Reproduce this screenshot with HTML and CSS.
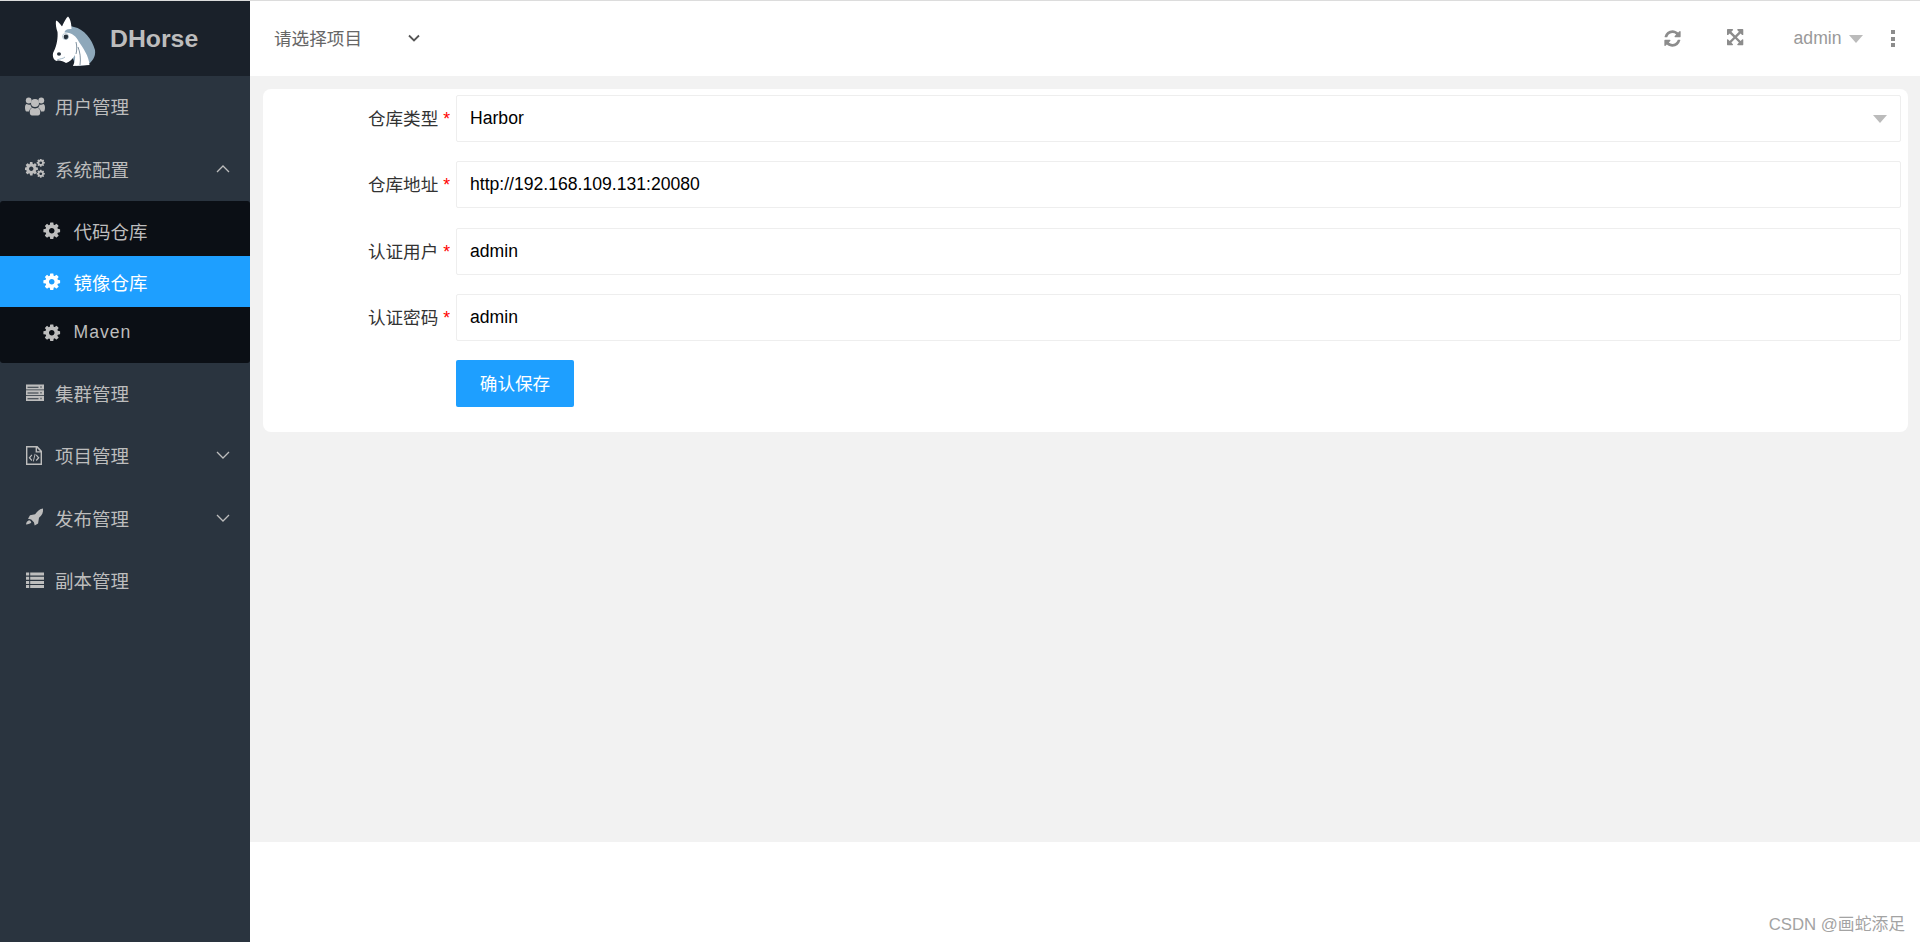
FILE: index.html
```html
<!DOCTYPE html>
<html lang="zh-CN">
<head>
<meta charset="utf-8">
<title>DHorse</title>
<link rel="stylesheet" href="styles.css">
</head>
<body>
<svg class="defs" width="0" height="0" aria-hidden="true">
  <defs>
    <symbol id="i-gear" viewBox="0 0 1792 1792"><path d="M1152 896q0-106-75-181t-181-75-181 75-75 181 75 181 181 75 181-75 75-181zm512-109v222q0 12-8 23t-20 13l-185 28q-19 54-39 91 35 50 107 138 10 12 10 25t-9 23q-27 37-99 108t-94 71q-12 0-26-9l-138-108q-44 23-91 38-16 136-29 186-7 28-36 28h-222q-14 0-24.500-8.500t-11.500-21.500l-28-184q-49-16-90-37l-141 107q-10 9-25 9-14 0-25-11-126-114-165-168-7-10-7-23 0-12 8-23 15-21 51-66.500t54-70.500q-27-50-41-99l-183-27q-13-2-21-12.500t-8-23.500v-222q0-12 8-23t19-13l186-28q14-46 39-92-40-57-107-138-10-12-10-24 0-10 9-23 26-36 98.500-107.500t94.500-71.500q13 0 26 10l138 107q44-23 91-38 16-136 29-186 7-28 36-28h222q14 0 24.500 8.500t11.500 21.500l28 184q49 16 90 37l142-107q9-9 24-9 13 0 25 10 129 119 165 170 7 8 7 22 0 12-8 23-15 21-51 66.500t-54 70.500q26 50 41 98l183 28q13 2 21 12.500t8 23.500z"/></symbol>
    <symbol id="i-down" viewBox="0 0 14 8"><path d="M1 1l6 6 6-6" fill="none" stroke="currentColor" stroke-width="1.300"/></symbol>
    <symbol id="i-up" viewBox="0 0 14 8"><path d="M1 7l6-6 6 6" fill="none" stroke="currentColor" stroke-width="1.300"/></symbol>
  </defs>
</svg>
<div class="app">
  <aside class="sidebar">
    <div class="brand">
      <svg class="horse" viewBox="0 0 70 70" width="70" height="70" aria-hidden="true">
        <path fill="#8ea8ba" d="M20 21C24 19 30 20 34 21C44 23 52 33 55 44C56 51 52 56 47 59L36 60Z"/>
        <path fill="#fff" d="M16 14.500C18 15 20 18 22 20.500C24 16 26 12 28 10.500C30.500 13 31.500 18 31.500 23C27 22.500 24.500 24.500 24.500 26.500C31 26 36.500 30 39 36C43 42 49 50 49.500 59L33 60C34.500 56.500 35.500 52.500 35 49C33 53 29 56 26 57C23 55 19 54 16.500 55C12.500 53.500 12 48 14 45C17 39 18 31 17.500 26C16 22 15.500 18 16 14.500Z"/>
        <circle cx="26" cy="31" r="2.400" fill="#26313b"/>
        <circle cx="25.500" cy="30.500" r="3" fill="none" stroke="#8ea8ba" stroke-width=".6"/>
        <ellipse cx="19" cy="48" rx="2" ry="1.700" fill="#26313b"/>
        <path d="M17 54C20 52.500 23 53 25 51" fill="none" stroke="#8ea8ba" stroke-width=".8"/>
        <path d="M36 48C37 44 37 40 36 36M40 59C41 52 40 46 38 41" fill="none" stroke="#5f7688" stroke-width=".8"/>
      </svg>
      <span class="brand-name">DHorse</span>
    </div>
    <nav class="menu">
      <a class="item">
        <svg class="ico" viewBox="0 0 20 19" aria-hidden="true"><circle cx="3.700" cy="3.500" r="2.900"/><circle cx="16.300" cy="3.500" r="2.900"/><circle cx="10" cy="6" r="4"/><path d="M0 10.500C0 8.200.8 7 1.800 7c.9.700 2.400 1 3.700.4.100 1.300.7 2.400 1.600 3.200-1.500.6-2.600 2-3 3.900H1.500C.5 14.500 0 12.800 0 10.500zM20 10.500C20 8.200 19.200 7 18.200 7c-.9.700-2.400 1-3.700.4-.1 1.300-.7 2.400-1.600 3.200 1.500.6 2.600 2 3 3.900h2.600c1 0 1.500-1.700 1.500-4zM4.800 15.500c0-2.800 1-4.600 2.700-4.700 1.400 1 3.600 1 5 0 1.700.1 2.700 1.900 2.700 4.700 0 2-.9 3-2.200 3H7c-1.300 0-2.200-1-2.200-3z"/></svg>
        <span>用户管理</span>
      </a>
      <a class="item">
        <svg class="ico" viewBox="0 0 20 19" aria-hidden="true"><use href="#i-gear" x="-1.500" y="2" width="15.500" height="15.500"/><use href="#i-gear" x="11" y="-1" width="9.500" height="9.500"/><use href="#i-gear" x="11" y="10" width="9.500" height="9.500"/></svg>
        <span>系统配置</span>
        <svg class="chev" aria-hidden="true"><use href="#i-up"/></svg>
      </a>
      <div class="submenu">
        <a class="subitem"><svg class="ico-sm" aria-hidden="true"><use href="#i-gear"/></svg><span>代码仓库</span></a>
        <a class="subitem active"><svg class="ico-sm" aria-hidden="true"><use href="#i-gear"/></svg><span>镜像仓库</span></a>
        <a class="subitem"><svg class="ico-sm" aria-hidden="true"><use href="#i-gear"/></svg><span class="latin">Maven</span></a>
      </div>
      <a class="item">
        <svg class="ico" viewBox="0 0 20 19" aria-hidden="true"><path d="M1 1.500h18v5H1zM1 7.200h18v5H1zM1 12.900h18v5H1z"/><path fill="#2a343f" d="M2.500 3.800h11v1h-11zM2.500 9.500h11v1h-11zM2.500 15.200h11v1h-11zM15.500 3.300h1v1.500h-1zM15.500 9h1v1.500h-1zM15.500 14.700h1v1.500h-1z"/></svg>
        <span>集群管理</span>
      </a>
      <a class="item">
        <svg class="ico" viewBox="0 0 20 19" aria-hidden="true"><path fill-rule="evenodd" d="M1 0h11.500L17 5v14H1zM2.400 1.400v16.200h13.200V6.500h-5V1.400zM12 1.900v3.300h3.100z"/><path d="M6.500 8.500l.8.800-2 2.400 2 2.400-.8.800-2.900-3.200zM11.600 8.500l-.8.800 2 2.400-2 2.400.8.800 2.900-3.200zM9.700 7.800l.9.200-1.800 7.500-.9-.2z"/></svg>
        <span>项目管理</span>
        <svg class="chev" aria-hidden="true"><use href="#i-down"/></svg>
      </a>
      <a class="item">
        <svg class="ico" viewBox="0 0 20 19" aria-hidden="true"><path d="M18 .5c.4 3.800-.8 6.800-4 9.300l-.9 5.600-3.400 2.100-.8-3.300-2.700-2.700-3.200-.8 2-3.500 5.100-.9C12.700 3 14.800.8 18 .5zM4 12.300c1.200.2 2.100 1.100 2.300 2.300-.8 1-2.700 1.700-5.300 1.900.2-2 1.300-3.600 3-4.200z"/></svg>
        <span>发布管理</span>
        <svg class="chev" aria-hidden="true"><use href="#i-down"/></svg>
      </a>
      <a class="item">
        <svg class="ico" viewBox="0 0 20 19" aria-hidden="true"><path d="M1 2.500h3.200v3H1zM5.200 2.500H19v3H5.200zM1 6.800h3.200v3H1zM5.200 6.800H19v3H5.200zM1 11h3.200v3H1zM5.200 11H19v3H5.200zM1 15h3.200v3H1zM5.200 15H19v3H5.200z"/></svg>
        <span>副本管理</span>
      </a>
    </nav>
  </aside>
  <div class="main">
    <header class="topbar">
      <div class="project">
        <span>请选择项目</span>
        <svg class="project-chev" viewBox="0 0 12 8" aria-hidden="true"><path d="M1 1.500l5 5 5-5" fill="none" stroke="currentColor" stroke-width="1.800"/></svg>
      </div>
      <div class="tools">
        <svg class="tool" viewBox="0 0 1792 1792" aria-hidden="true"><path d="M1639 1056q0 5-1 7-64 268-268 434.500t-478 166.500q-146 0-282.500-55t-243.500-157l-129 129q-19 19-45 19t-45-19-19-45v-448q0-26 19-45t45-19h448q26 0 45 19t19 45-19 45l-137 137q71 66 161 102t187 36q134 0 250-65t186-179q11-17 53-117 8-23 30-23h192q13 0 22.500 9.500t9.500 22.500zm25-800v448q0 26-19 45t-45 19h-448q-26 0-45-19t-19-45 19-45l138-138q-148-137-349-137-134 0-250 65t-186 179q-11 17-53 117-8 23-30 23h-199q-13 0-22.500-9.500t-9.500-22.500v-7q65-268 270-434.500t480-166.500q146 0 284 55.500t245 156.500l130-129q19-19 45-19t45 19 19 45z"/></svg>
        <svg class="tool tool-expand" viewBox="0 0 1792 1792" aria-hidden="true"><path d="M1283 413l-355 355 355 355 144-144q29-31 70-14 39 17 39 59v448q0 26-19 45t-45 19h-448q-42 0-59-40-17-39 14-69l144-144-355-355-355 355 144 144q31 30 14 69-17 40-59 40h-448q-26 0-45-19t-19-45v-448q0-42 40-59 39-17 69 14l144 144 355-355-355-355-144 144q-19 19-45 19-12 0-24-5-40-17-40-59v-448q0-26 19-45t45-19h448q42 0 59 40 17 39-14 69l-144 144 355 355 355-355-144-144q-31-30-14-69 17-40 59-40h448q26 0 45 19t19 45v448q0 42-39 59-13 5-25 5-26 0-45-19z"/></svg>
        <span class="user">admin</span>
        <i class="caret caret-user"></i>
        <span class="dots"><i></i><i></i><i></i></span>
      </div>
    </header>
    <main class="content">
      <form class="card">
        <label class="label">仓库类型 <b>*</b></label>
        <div class="field select"><span>Harbor</span><i class="caret"></i></div>
        <label class="label">仓库地址 <b>*</b></label>
        <input class="field" value="http://192.168.109.131:20080">
        <label class="label">认证用户 <b>*</b></label>
        <input class="field" value="admin">
        <label class="label">认证密码 <b>*</b></label>
        <input class="field" value="admin">
        <button class="save" type="button">确认保存</button>
      </form>
    </main>
    <footer class="foot"><span class="mark">CSDN @画蛇添足</span></footer>
  </div>
</div>
</body>
</html>
```
FILE: styles.css
```css
* { box-sizing: border-box; }
html, body { height: 100%; margin: 0; }
body {
  overflow: hidden;
  font-family: "Liberation Sans", "Noto Sans CJK SC", sans-serif;
  font-size: 17.6px;
  background: #fff;
  border-top: 1px solid #dcdcdc;
}
.defs { position: absolute; }
.app { display: flex; height: 100%; }

.sidebar { width: 250px; flex: none; background: #2a343f; color: #bdbdbd; }
.brand { height: 75px; background: #1a212a; display: flex; align-items: center; padding-left: 40px; }
.horse { flex: none; margin-top: 4px; }
.brand-name { font-family: "Liberation Sans", sans-serif; font-weight: 700; font-size: 24.8px; color: #bdbdbd; }
.menu { display: block; }
.item { display: flex; align-items: center; height: 62.4px; padding: 0 0 2px 25px; font-size: 18.5px; }
.ico { width: 20px; height: 19px; flex: none; margin-right: 10px; fill: #bdbdbd; }
.chev { width: 14px; height: 8px; margin-left: auto; margin-right: 20px; color: #bdbdbd; }
.submenu { background: #0b0f15; padding: 5px 0; border-radius: 3px; }
.subitem { display: flex; align-items: center; height: 50.6px; padding-left: 41.500px; font-size: 18.5px; }
.subitem.active { background: #1e9fff; color: #fff; }
.ico-sm { width: 19.500px; height: 19.500px; flex: none; margin-right: 12.500px; fill: currentColor; }
.latin { letter-spacing: 1px; font-size: 17.6px; }

.main { flex: 1; display: flex; flex-direction: column; min-width: 0; }
.topbar { height: 75px; flex: none; background: #fff; display: flex; align-items: center; justify-content: space-between; padding-left: 24px; color: #666; }
.project { display: flex; align-items: center; padding-bottom: 2px; }
.project-chev { width: 12px; height: 8px; margin-left: 46px; color: #555; }
.tools { display: flex; align-items: center; padding-right: 25px; color: #999; }
.tool { width: 19px; height: 19px; fill: #8c8c8c; margin-right: 45px; }
.tool-expand { margin-right: 48px; }
.user { font-size: 17.6px; color: #999; }
.caret { display: block; width: 0; height: 0; border-style: solid; border-width: 8px 7.500px 0; border-color: #bbb transparent transparent; }
.caret-user { margin-left: 7px; margin-right: 28px; }
.dots { display: flex; flex-direction: column; gap: 2.500px; }
.dots i { display: block; width: 4.500px; height: 4px; background: #8c8c8c; }

.content { flex: 1; background: #f2f2f2; padding: 13px 12px 0 13px; }
.card {
  background: #fff;
  border-radius: 8px;
  display: grid;
  grid-template-columns: 193px 1fr;
  row-gap: 19.250px;
  padding: 6px 7px 24.500px 0;
  align-items: center;
}
.label { justify-self: end; padding-right: 6px; color: #333; font-size: 17.6px; position: relative; top: -1px; }
.label b { color: #f00; font-weight: 400; }
.field {
  display: block;
  width: 100%;
  height: 47px;
  border: 1px solid #eee;
  border-radius: 2px;
  padding: 0 13px;
  font: inherit;
  color: #000;
  background: #fff;
  outline: none;
}
.select { display: flex; align-items: center; justify-content: space-between; }
.save {
  grid-column: 2;
  justify-self: start;
  width: 118px;
  height: 47px;
  border: 0;
  border-radius: 2px;
  padding: 0 0 2px;
  background: #1e9fff;
  color: #fff;
  font: inherit;
}
.foot { height: 100px; flex: none; background: #fff; display: flex; justify-content: flex-end; align-items: flex-end; padding: 0 15px 7px 0; }
.mark { font-size: 16.800px; color: #a3a3a3; }
```
